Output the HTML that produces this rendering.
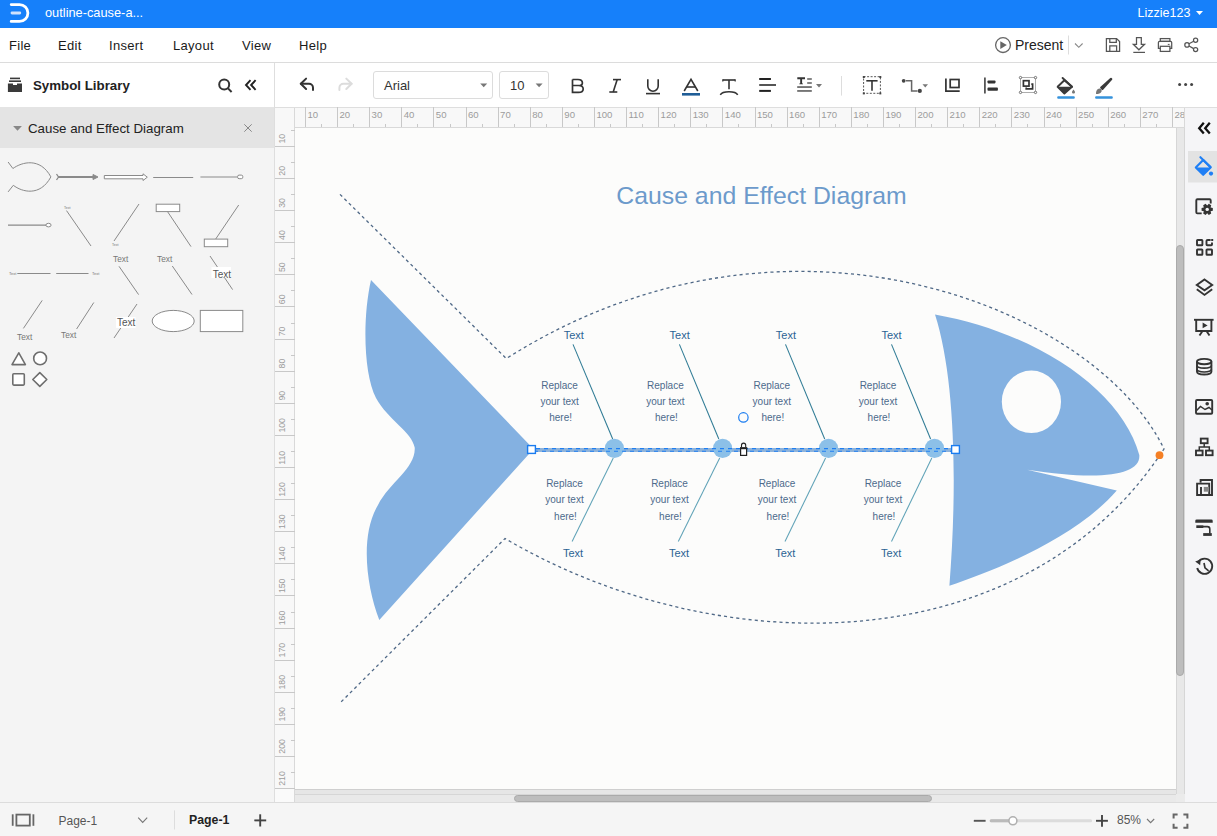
<!DOCTYPE html>
<html><head><meta charset="utf-8">
<style>
*{margin:0;padding:0;box-sizing:border-box}
html,body{width:1217px;height:836px;overflow:hidden;background:#f5f5f5;font-family:"Liberation Sans",sans-serif;position:relative}
.a{position:absolute}
.t{position:absolute;white-space:nowrap;line-height:1}
svg{position:absolute;overflow:visible}
#top{left:0;top:0;width:1217px;height:28px;background:#1680fa}
#menu{left:0;top:28px;width:1217px;height:35px;background:#fff;border-bottom:1px solid #dcdcdc}
#lp{left:0;top:63px;width:275px;height:739px;background:#f4f4f4;border-right:1px solid #dedede}
#lph{left:0;top:63px;width:274px;height:44px;background:#fff}
#cat{left:0;top:107px;width:274px;height:41px;background:#e4e4e4}
#tb{left:275px;top:63px;width:942px;height:45px;background:#fff;border-bottom:1px solid #dedede}
#rtop{left:275px;top:108px;width:910px;height:20px;background:#f8f8f8;border-bottom:1px solid #d9d9d9;border-right:1px solid #d9d9d9}
#rleft{left:275px;top:108px;width:20px;height:681px;background:#f8f8f8;border-right:1px solid #d9d9d9}
#canvas{left:295px;top:128px;width:881px;height:661px;background:#fcfcfb}
#vsb{left:1176px;top:128px;width:9px;height:666px;background:#e8e8e8;border-left:1px solid #d6d6d6;border-right:1px solid #d6d6d6}
#hsb{left:295px;top:789px;width:881px;height:13px;background:#e9e9e9;border-top:1px solid #cfcfcf}
#hsb2{left:295px;top:790px;width:881px;height:5px;background:#e6e6e6;border-bottom:1px solid #d6d6d6}
#corner{left:275px;top:789px;width:20px;height:13px;background:#fafafa;border-right:1px solid #d9d9d9}
#corner2{left:1176px;top:794px;width:9px;height:8px;background:#ebebeb}
#rs{left:1185px;top:108px;width:32px;height:694px;background:#f5f5f7}
#status{left:0;top:802px;width:1217px;height:34px;background:#f5f5f5;border-top:1px solid #dcdcdc}
.mt{font-size:13px;color:#1a1a1a;top:39px;letter-spacing:0.3px}
.box{position:absolute;background:#fff;border:1px solid #dcdcdc;border-radius:3px}
</style></head><body>
<div id="top" class="a"></div>
<div id="menu" class="a"></div>
<div id="lp" class="a"></div>
<div id="lph" class="a"></div>
<div id="cat" class="a"></div>
<div id="tb" class="a"></div>
<div id="rtop" class="a"></div>
<div id="rleft" class="a"></div>
<div id="canvas" class="a"></div>
<div id="vsb" class="a"></div>
<div id="hsb" class="a"></div><div id="hsb2" class="a"></div><div id="corner" class="a"></div><div id="corner2" class="a"></div>
<div id="rs" class="a"></div>
<div id="status" class="a"></div>

<!-- top bar -->
<svg width="30" height="28" style="left:0;top:0">
  <path d="M11.2 4.6 H19.5 A8.4 8.4 0 0 1 19.5 21.4 H11.2" fill="none" stroke="#fff" stroke-width="2.8" stroke-linecap="round"/>
  <path d="M12 13 H19.8" stroke="#cfe2fd" stroke-width="2.8" stroke-linecap="round"/>
</svg>
<div class="t" style="left:45px;top:7px;font-size:12.8px;color:#fff">outline-cause-a...</div>
<div class="t" style="left:1137.6px;top:7px;font-size:12.5px;color:#fff">Lizzie123</div>
<svg width="10" height="6" style="left:1196px;top:11px"><path d="M0 0H7L3.5 4Z" fill="#fff"/></svg>

<!-- menu -->
<div class="t mt" style="left:9px">File</div>
<div class="t mt" style="left:58px">Edit</div>
<div class="t mt" style="left:109px">Insert</div>
<div class="t mt" style="left:173px">Layout</div>
<div class="t mt" style="left:242px">View</div>
<div class="t mt" style="left:299px">Help</div>

<!-- left header -->
<div class="t" style="left:33px;top:79px;font-size:13.3px;font-weight:bold;color:#222">Symbol Library</div>
<div class="t" style="left:28px;top:122px;font-size:13.3px;color:#222">Cause and Effect Diagram</div>

<!-- toolbar -->
<div class="box" style="left:373px;top:71px;width:120px;height:28px"></div>
<div class="t" style="left:384px;top:79px;font-size:13px;color:#333">Arial</div>
<div class="box" style="left:499px;top:71px;width:50px;height:28px"></div>
<div class="t" style="left:510px;top:79px;font-size:13px;color:#333">10</div>

<div class="t" style="left:1015px;top:38px;font-size:14px;color:#222">Present</div>

<!-- status -->
<div class="t" style="left:58.5px;top:815px;font-size:12px;color:#555">Page-1</div>
<div class="t" style="left:189px;top:813.5px;font-size:12.3px;font-weight:bold;color:#222">Page-1</div>
<div class="t" style="left:1117px;top:814px;font-size:12px;color:#555">85%</div>
<svg width="1217" height="836" style="left:0;top:0"><defs><clipPath id="ct"><rect x="295" y="107" width="889" height="20"/></clipPath><clipPath id="cl"><rect x="275" y="127" width="20" height="662"/></clipPath></defs><g clip-path="url(#ct)"><g stroke="#c8c8c8" stroke-width="1" shape-rendering="crispEdges"><line x1="305.5" y1="107" x2="305.5" y2="127"/><line x1="321.5" y1="124" x2="321.5" y2="127"/><line x1="337.5" y1="107" x2="337.5" y2="127"/><line x1="353.5" y1="124" x2="353.5" y2="127"/><line x1="369.5" y1="107" x2="369.5" y2="127"/><line x1="385.5" y1="124" x2="385.5" y2="127"/><line x1="401.5" y1="107" x2="401.5" y2="127"/><line x1="417.5" y1="124" x2="417.5" y2="127"/><line x1="433.5" y1="107" x2="433.5" y2="127"/><line x1="450.5" y1="124" x2="450.5" y2="127"/><line x1="466.5" y1="107" x2="466.5" y2="127"/><line x1="482.5" y1="124" x2="482.5" y2="127"/><line x1="498.5" y1="107" x2="498.5" y2="127"/><line x1="514.5" y1="124" x2="514.5" y2="127"/><line x1="530.5" y1="107" x2="530.5" y2="127"/><line x1="546.5" y1="124" x2="546.5" y2="127"/><line x1="562.5" y1="107" x2="562.5" y2="127"/><line x1="578.5" y1="124" x2="578.5" y2="127"/><line x1="594.5" y1="107" x2="594.5" y2="127"/><line x1="610.5" y1="124" x2="610.5" y2="127"/><line x1="626.5" y1="107" x2="626.5" y2="127"/><line x1="642.5" y1="124" x2="642.5" y2="127"/><line x1="658.5" y1="107" x2="658.5" y2="127"/><line x1="674.5" y1="124" x2="674.5" y2="127"/><line x1="690.5" y1="107" x2="690.5" y2="127"/><line x1="706.5" y1="124" x2="706.5" y2="127"/><line x1="722.5" y1="107" x2="722.5" y2="127"/><line x1="738.5" y1="124" x2="738.5" y2="127"/><line x1="755.5" y1="107" x2="755.5" y2="127"/><line x1="771.5" y1="124" x2="771.5" y2="127"/><line x1="787.5" y1="107" x2="787.5" y2="127"/><line x1="803.5" y1="124" x2="803.5" y2="127"/><line x1="819.5" y1="107" x2="819.5" y2="127"/><line x1="835.5" y1="124" x2="835.5" y2="127"/><line x1="851.5" y1="107" x2="851.5" y2="127"/><line x1="867.5" y1="124" x2="867.5" y2="127"/><line x1="883.5" y1="107" x2="883.5" y2="127"/><line x1="899.5" y1="124" x2="899.5" y2="127"/><line x1="915.5" y1="107" x2="915.5" y2="127"/><line x1="931.5" y1="124" x2="931.5" y2="127"/><line x1="947.5" y1="107" x2="947.5" y2="127"/><line x1="963.5" y1="124" x2="963.5" y2="127"/><line x1="979.5" y1="107" x2="979.5" y2="127"/><line x1="995.5" y1="124" x2="995.5" y2="127"/><line x1="1011.5" y1="107" x2="1011.5" y2="127"/><line x1="1027.5" y1="124" x2="1027.5" y2="127"/><line x1="1044.5" y1="107" x2="1044.5" y2="127"/><line x1="1060.5" y1="124" x2="1060.5" y2="127"/><line x1="1076.5" y1="107" x2="1076.5" y2="127"/><line x1="1092.5" y1="124" x2="1092.5" y2="127"/><line x1="1108.5" y1="107" x2="1108.5" y2="127"/><line x1="1124.5" y1="124" x2="1124.5" y2="127"/><line x1="1140.5" y1="107" x2="1140.5" y2="127"/><line x1="1156.5" y1="124" x2="1156.5" y2="127"/><line x1="1172.5" y1="107" x2="1172.5" y2="127"/><line x1="1188.5" y1="124" x2="1188.5" y2="127"/></g><g fill="#9c9c9c" font-size="9.6" font-family="Liberation Sans"><text x="307.4" y="118">10</text><text x="339.5" y="118">20</text><text x="371.6" y="118">30</text><text x="403.7" y="118">40</text><text x="435.8" y="118">50</text><text x="468.0" y="118">60</text><text x="500.1" y="118">70</text><text x="532.2" y="118">80</text><text x="564.3" y="118">90</text><text x="596.4" y="118">100</text><text x="628.5" y="118">110</text><text x="660.6" y="118">120</text><text x="692.7" y="118">130</text><text x="724.8" y="118">140</text><text x="756.9" y="118">150</text><text x="789.1" y="118">160</text><text x="821.2" y="118">170</text><text x="853.3" y="118">180</text><text x="885.4" y="118">190</text><text x="917.5" y="118">200</text><text x="949.6" y="118">210</text><text x="981.7" y="118">220</text><text x="1013.8" y="118">230</text><text x="1045.9" y="118">240</text><text x="1078.1" y="118">250</text><text x="1110.2" y="118">260</text><text x="1142.3" y="118">270</text><text x="1174.4" y="118">280</text></g></g><g clip-path="url(#cl)"><g stroke="#c8c8c8" stroke-width="1" shape-rendering="crispEdges"><line x1="275" y1="146.5" x2="295" y2="146.5"/><line x1="275" y1="178.5" x2="295" y2="178.5"/><line x1="275" y1="210.5" x2="295" y2="210.5"/><line x1="275" y1="242.5" x2="295" y2="242.5"/><line x1="275" y1="274.5" x2="295" y2="274.5"/><line x1="275" y1="306.5" x2="295" y2="306.5"/><line x1="275" y1="339.5" x2="295" y2="339.5"/><line x1="275" y1="371.5" x2="295" y2="371.5"/><line x1="275" y1="403.5" x2="295" y2="403.5"/><line x1="275" y1="435.5" x2="295" y2="435.5"/><line x1="275" y1="467.5" x2="295" y2="467.5"/><line x1="275" y1="499.5" x2="295" y2="499.5"/><line x1="275" y1="531.5" x2="295" y2="531.5"/><line x1="275" y1="563.5" x2="295" y2="563.5"/><line x1="275" y1="595.5" x2="295" y2="595.5"/><line x1="275" y1="628.5" x2="295" y2="628.5"/><line x1="275" y1="660.5" x2="295" y2="660.5"/><line x1="275" y1="692.5" x2="295" y2="692.5"/><line x1="275" y1="724.5" x2="295" y2="724.5"/><line x1="275" y1="756.5" x2="295" y2="756.5"/><line x1="275" y1="788.5" x2="295" y2="788.5"/><line x1="291" y1="130.5" x2="295" y2="130.5"/><line x1="291" y1="162.5" x2="295" y2="162.5"/><line x1="291" y1="194.5" x2="295" y2="194.5"/><line x1="291" y1="226.5" x2="295" y2="226.5"/><line x1="291" y1="258.5" x2="295" y2="258.5"/><line x1="291" y1="290.5" x2="295" y2="290.5"/><line x1="291" y1="323.5" x2="295" y2="323.5"/><line x1="291" y1="355.5" x2="295" y2="355.5"/><line x1="291" y1="387.5" x2="295" y2="387.5"/><line x1="291" y1="419.5" x2="295" y2="419.5"/><line x1="291" y1="451.5" x2="295" y2="451.5"/><line x1="291" y1="483.5" x2="295" y2="483.5"/><line x1="291" y1="515.5" x2="295" y2="515.5"/><line x1="291" y1="547.5" x2="295" y2="547.5"/><line x1="291" y1="579.5" x2="295" y2="579.5"/><line x1="291" y1="612.5" x2="295" y2="612.5"/><line x1="291" y1="644.5" x2="295" y2="644.5"/><line x1="291" y1="676.5" x2="295" y2="676.5"/><line x1="291" y1="708.5" x2="295" y2="708.5"/><line x1="291" y1="740.5" x2="295" y2="740.5"/><line x1="291" y1="772.5" x2="295" y2="772.5"/></g><g fill="#9c9c9c" font-size="9.9" font-family="Liberation Sans"><text transform="translate(284.9 143.6) rotate(-90) scale(0.88 1)">10</text><text transform="translate(284.9 175.7) rotate(-90) scale(0.88 1)">20</text><text transform="translate(284.9 207.8) rotate(-90) scale(0.88 1)">30</text><text transform="translate(284.9 239.9) rotate(-90) scale(0.88 1)">40</text><text transform="translate(284.9 272.1) rotate(-90) scale(0.88 1)">50</text><text transform="translate(284.9 304.2) rotate(-90) scale(0.88 1)">60</text><text transform="translate(284.9 336.3) rotate(-90) scale(0.88 1)">70</text><text transform="translate(284.9 368.4) rotate(-90) scale(0.88 1)">80</text><text transform="translate(284.9 400.5) rotate(-90) scale(0.88 1)">90</text><text transform="translate(284.9 432.6) rotate(-90) scale(0.88 1)">100</text><text transform="translate(284.9 464.7) rotate(-90) scale(0.88 1)">110</text><text transform="translate(284.9 496.8) rotate(-90) scale(0.88 1)">120</text><text transform="translate(284.9 528.9) rotate(-90) scale(0.88 1)">130</text><text transform="translate(284.9 561.0) rotate(-90) scale(0.88 1)">140</text><text transform="translate(284.9 593.1) rotate(-90) scale(0.88 1)">150</text><text transform="translate(284.9 625.3) rotate(-90) scale(0.88 1)">160</text><text transform="translate(284.9 657.4) rotate(-90) scale(0.88 1)">170</text><text transform="translate(284.9 689.5) rotate(-90) scale(0.88 1)">180</text><text transform="translate(284.9 721.6) rotate(-90) scale(0.88 1)">190</text><text transform="translate(284.9 753.7) rotate(-90) scale(0.88 1)">200</text><text transform="translate(284.9 785.8) rotate(-90) scale(0.88 1)">210</text></g></g></svg>
<svg width="1217" height="836" style="left:0;top:0">
<defs><clipPath id="cc"><rect x="295" y="127" width="881" height="661"/></clipPath></defs>
<g clip-path="url(#cc)" font-family="Liberation Sans">
<text x="616.3" y="204.2" font-size="24.8" fill="#6c9acb">Cause and Effect Diagram</text>
<!-- dotted outline -->
<g fill="none" stroke="#4f6886" stroke-width="1.3" stroke-dasharray="3.1 3.1">
<path d="M340 194.4 L506.3 358.6 C785.3 181.3 1095.3 306.5 1164 449 C1024.2 662.9 718.2 663.6 505 538.5 L340 703"/>
</g>
<!-- tail -->
<path fill="#84b1e1" d="M371 280 L533.5 449 L379.3 620 C366 585 360 535 378 505 C390 482 416 468 414.7 447.6 C412 432 388 420 376 398 C364 375 362 320 371 280 Z"/>
<!-- head -->
<path fill="#84b1e1" d="M935 314.5 C1038.1 333 1121.9 391.1 1139.3 455 C1140.9 475 1101.7 481.2 1027.1 469.7 L1116.8 490.5 C1074 540 990 572 949.4 585.7 C957 490 956 380 935 314.5 Z"/>
<ellipse cx="1031.4" cy="401.8" rx="29.6" ry="31.3" fill="#fcfcfb"/>
<!-- upper bones -->
<g stroke="#2f7b95" stroke-width="1.05">
<line x1="573" y1="344.4" x2="612.7" y2="439"/>
<line x1="679.4" y1="344.4" x2="718.8" y2="439"/>
<line x1="785.5" y1="344.4" x2="824.7" y2="439"/>
<line x1="891.5" y1="344.4" x2="930.6" y2="439"/>
</g>
<g stroke="#5fa2b7" stroke-width="1.05">
<line x1="613.3" y1="458" x2="572.1" y2="541.4"/>
<line x1="719.7" y1="458" x2="678.3" y2="541.4"/>
<line x1="825.6" y1="458" x2="785" y2="541.4"/>
<line x1="931.8" y1="458" x2="891.5" y2="541.4"/>
</g>
<!-- spine -->
<line x1="533" y1="449.9" x2="955" y2="449.9" stroke="#8fb3da" stroke-width="4"/>
<g fill="#8cc0e8">
<circle cx="614.4" cy="448.4" r="9.6"/>
<circle cx="722.6" cy="448.4" r="9.6"/>
<circle cx="828.5" cy="448.4" r="9.6"/>
<circle cx="934.5" cy="448.4" r="9.6"/>
</g>
<g stroke="#1f7ff2" stroke-width="1.1" stroke-dasharray="4 4">
<line x1="536" y1="448.6" x2="951" y2="448.6" stroke-dashoffset="0"/>
<line x1="536" y1="451.3" x2="951" y2="451.3" stroke-dashoffset="2"/>
</g>
<rect x="527.6" y="445.6" width="7.8" height="7.8" fill="#fff" stroke="#1a7cf0" stroke-width="1.4"/>
<rect x="951.6" y="445.6" width="7.8" height="7.8" fill="#fff" stroke="#1a7cf0" stroke-width="1.4"/>
<circle cx="743.4" cy="417.4" r="4.7" fill="none" stroke="#1a7cf0" stroke-width="1.2"/>
<!-- lock -->
<path d="M741.5 447.6 V445.2 A2.1 2.1 0 0 1 745.7 445.2 V447.6" fill="none" stroke="#222" stroke-width="1.1"/>
<rect x="740.6" y="447.8" width="6" height="7.6" fill="#fff" stroke="#222" stroke-width="1.2"/><line x1="740" y1="448.4" x2="747.2" y2="448.4" stroke="#222" stroke-width="1.6"/>

<circle cx="1159.5" cy="455.2" r="3.9" fill="#f58025"/>
<!-- labels -->
<g font-size="11" fill="#2b6394">
<text x="563.7" y="338.9">Text</text>
<text x="669.6" y="338.9">Text</text>
<text x="775.8" y="338.9">Text</text>
<text x="881.5" y="338.9">Text</text>
<text x="563" y="557">Text</text>
<text x="669" y="557">Text</text>
<text x="775.2" y="557">Text</text>
<text x="881.1" y="557">Text</text>
</g>
<g font-size="10" fill="#4d6a8b" text-anchor="middle">
<text x="559.6" y="389">Replace</text><text x="559.6" y="404.9">your text</text><text x="560.6" y="420.7">here!</text>
<text x="665.4" y="389">Replace</text><text x="665.4" y="404.9">your text</text><text x="666.4" y="420.7">here!</text>
<text x="771.8" y="389">Replace</text><text x="771.8" y="404.9">your text</text><text x="772.8" y="420.7">here!</text>
<text x="878" y="389">Replace</text><text x="878" y="404.9">your text</text><text x="879" y="420.7">here!</text>
<text x="564.5" y="487">Replace</text><text x="564.5" y="502.8">your text</text><text x="565.5" y="519.5">here!</text>
<text x="669.5" y="487">Replace</text><text x="669.5" y="502.8">your text</text><text x="670.5" y="519.5">here!</text>
<text x="777" y="487">Replace</text><text x="777" y="502.8">your text</text><text x="778" y="519.5">here!</text>
<text x="883" y="487">Replace</text><text x="883" y="502.8">your text</text><text x="884" y="519.5">here!</text>
</g>
</g>
</svg>

<svg width="275" height="400" style="left:0;top:0" font-family="Liberation Sans">
<g fill="none" stroke="#8a8a8a" stroke-width="1">
<!-- fish outline -->
<path d="M8.1 162 L12.9 168.5 C22 162 40 157 50.9 176.9 C40 197 22 192 13.3 185.3 L8.1 191.9"/>
</g>
<!-- thick arrow -->
<g stroke="#8a8a8a">
<line x1="58" y1="177" x2="94" y2="177" stroke-width="1.8"/>
<path d="M56.5 174 L58.5 177 L56.5 180" fill="none" stroke-width="1.3"/>
<path d="M93 174.5 L98 177 L93 179.5 Z" fill="#8a8a8a" stroke-width="1"/>
<!-- double arrow -->
<path d="M104.3 175.5 H143 V173.8 L147.3 177.2 L143 180.5 V178.8 H104.3 Z" fill="#fff" stroke-width="1"/>
<line x1="153.2" y1="177.5" x2="193.2" y2="177.5" stroke-width="1.2"/>
<line x1="200.4" y1="177" x2="237.6" y2="177" stroke-width="1.2"/>
<rect x="237.6" y="175.1" width="5.2" height="3.6" rx="1.5" fill="#fff" stroke-width="1"/>
<!-- row2 -->
<line x1="8" y1="225.1" x2="46" y2="225.1" stroke-width="1.2"/>
<ellipse cx="48.5" cy="225.1" rx="2.6" ry="1.8" fill="#fff" stroke-width="1"/>
<line x1="66.5" y1="210.6" x2="91" y2="246" stroke-width="1"/>
<line x1="139" y1="204" x2="114" y2="241" stroke-width="1"/>
<rect x="156.2" y="204.2" width="23.5" height="7.4" fill="#fff" stroke-width="1"/>
<line x1="167.5" y1="211.6" x2="191" y2="246.6" stroke-width="1"/>
<rect x="204.3" y="239.1" width="23.4" height="7.6" fill="#fff" stroke-width="1"/>
<line x1="238.7" y1="205" x2="215.7" y2="239" stroke-width="1"/>
<!-- row3 -->
<line x1="17.3" y1="273.5" x2="50.5" y2="273.5" stroke-width="1.1"/>
<line x1="56.2" y1="273.5" x2="88.5" y2="273.5" stroke-width="1.1"/>
<line x1="119" y1="266.3" x2="138.6" y2="294.6" stroke-width="1"/>
<line x1="172.3" y1="266" x2="192" y2="294.5" stroke-width="1"/>
<line x1="210" y1="256" x2="232.6" y2="289.6" stroke-width="1"/>
<!-- row4 -->
<line x1="42.2" y1="300.4" x2="23.4" y2="328.4" stroke-width="1"/>
<line x1="93.8" y1="302.5" x2="76.6" y2="329" stroke-width="1"/>
<line x1="137" y1="304" x2="114" y2="338" stroke-width="1"/>
<ellipse cx="173.2" cy="321" rx="21" ry="10.6" fill="#fff" stroke-width="1"/>
<rect x="200.3" y="310.4" width="42.5" height="21.2" fill="#fff" stroke-width="1"/>
</g>
<g fill="#777">
<text x="64" y="208.5" font-size="3.5">Text</text>
<text x="112" y="245.5" font-size="3.5">Text</text>
<text x="9" y="275" font-size="4">Text</text>
<text x="92" y="275" font-size="4">Text</text>
<text x="113" y="261.7" font-size="8.3">Text</text>
<text x="157" y="262" font-size="8.3">Text</text>
<text x="17" y="340" font-size="8.3">Text</text>
<text x="61" y="338" font-size="8.3">Text</text>
</g>
<rect x="211.5" y="267" width="19.5" height="11" fill="#fff"/>
<rect x="116" y="317" width="19.5" height="11" fill="#fff"/>
<g fill="#555" font-size="10">
<text x="212.7" y="277.5">Text</text>
<text x="117" y="326">Text</text>
</g>
<!-- basic shapes -->
<g fill="#fff" stroke="#6e6e6e" stroke-width="1.6" stroke-linejoin="round">
<path d="M18.8 352.8 L25.4 364.6 H12 Z"/>
<circle cx="40.1" cy="358.4" r="6.4"/>
<rect x="12.8" y="373.8" width="11.5" height="11.3" rx="1"/>
<path d="M39.8 372.6 L46.8 379.5 L39.8 386.4 L32.8 379.5 Z"/>
</g>
</svg>

<svg width="1217" height="836" style="left:0;top:0" font-family="Liberation Sans">
<!-- menu right -->
<g fill="none" stroke="#666" stroke-width="1.3">
<circle cx="1003" cy="45.1" r="7.4"/>
</g>
<path d="M1000.3 41.2 L1006.8 45.1 L1000.3 49 Z" fill="#666"/>
<line x1="1068.5" y1="35.5" x2="1068.5" y2="54.5" stroke="#ddd" stroke-width="1"/>
<path d="M1075 43.5 L1078.8 47.3 L1082.6 43.5" fill="none" stroke="#888" stroke-width="1.1"/>
<g fill="none" stroke="#555" stroke-width="1.25" stroke-linejoin="miter">
<path d="M1106.4 38.6 H1116.6 L1119.6 41.6 V51.3 H1106.4 Z"/>
<path d="M1109.8 38.6 V42.3 H1116.3 V38.6"/>
<path d="M1109.8 51.3 V45.8 H1116.6 V51.3"/>
<path d="M1136.5 37.6 H1141.3 V44.3 H1144.6 L1138.9 49.8 L1133.3 44.3 H1136.5 Z"/>
<line x1="1133.3" y1="52.4" x2="1145" y2="52.4"/>
<rect x="1160.3" y="38.6" width="9.6" height="2.8"/>
<path d="M1160.3 48.4 H1158.4 V42.6 Q1158.4 41.4 1159.6 41.4 H1170.5 Q1171.7 41.4 1171.7 42.6 V48.4 H1169.9"/>
<rect x="1160.3" y="46.3" width="9.6" height="5.1"/>
<circle cx="1187" cy="44.9" r="2.2"/>
<circle cx="1195.6" cy="40.3" r="2.1"/>
<circle cx="1195.6" cy="49.6" r="2.1"/>
<line x1="1189" y1="43.8" x2="1193.7" y2="41.3"/>
<line x1="1189" y1="46" x2="1193.7" y2="48.6"/>
</g>
<line x1="1167.8" y1="44.4" x2="1169.6" y2="44.4" stroke="#555" stroke-width="1"/>

<!-- left header icons -->
<g fill="#3a3a3a">
<rect x="10" y="77.6" width="10" height="1.6"/>
<rect x="9" y="80.4" width="12" height="1.6"/>
<path d="M7.9 83.4 H13 V85 H17 V83.4 H22 V92 H7.9 Z"/>
</g>
<g fill="none" stroke="#333" stroke-width="2">
<circle cx="224.2" cy="84.6" r="5"/>
<line x1="228" y1="88.4" x2="231.6" y2="92"/>
</g>
<g fill="none" stroke="#222" stroke-width="1.9">
<path d="M250.5 80.2 L246 85 L250.5 89.8"/>
<path d="M255.6 80.2 L251.1 85 L255.6 89.8"/>
</g>
<g stroke="#888" stroke-width="1">
<line x1="244.3" y1="124.3" x2="251.7" y2="131.7"/>
<line x1="251.7" y1="124.3" x2="244.3" y2="131.7"/>
</g>
<path d="M13.1 126 H21.9 L17.5 130.7 Z" fill="#888"/>

<!-- toolbar -->
<g fill="none" stroke="#333" stroke-width="2" stroke-linecap="round" stroke-linejoin="round">
<path d="M306.1 78.6 L300.8 83.8 L306.1 89"/>
<path d="M300.8 83.8 H309 A4 4 0 0 1 313 87.8 V90.1"/>
</g>
<g fill="none" stroke="#dcdcdc" stroke-width="2" stroke-linecap="round" stroke-linejoin="round">
<path d="M346.3 78.6 L351.6 83.8 L346.3 89"/>
<path d="M351.6 83.8 H343.4 A4 4 0 0 0 339.4 87.8 V90.1"/>
</g>
<path d="M480.2 83.4 H487.2 L483.7 87.2 Z" fill="#777"/>
<path d="M535.6 83.4 H542.6 L539.1 87.2 Z" fill="#777"/>
<!-- B -->
<path d="M572.5 79.5 H578 C581.5 79.5 582.4 81.3 582.4 82.9 C582.4 84.6 581.2 85.5 578.5 85.5 H572.5 M578.5 85.5 C582 85.5 583.2 87.2 583.2 89 C583.2 91 581.8 92.4 578.5 92.4 H572.5 V79.5" fill="none" stroke="#333" stroke-width="1.7"/>
<!-- I -->
<g stroke="#333" stroke-width="1.6" fill="none">
<line x1="613" y1="79.6" x2="621" y2="79.6"/>
<line x1="609.3" y1="92" x2="617.3" y2="92"/>
<line x1="617.2" y1="79.6" x2="613.2" y2="92"/>
</g>
<!-- U -->
<g stroke="#333" stroke-width="1.6" fill="none">
<path d="M647.8 79.2 V86 A5.2 5.2 0 0 0 658.2 86 V79.2"/>
<line x1="646" y1="93.6" x2="660" y2="93.6"/>
</g>
<!-- A -->
<g stroke="#333" stroke-width="1.6" fill="none">
<path d="M684.2 91 L691 79.3 L697.8 91"/>
<line x1="686.6" y1="87" x2="695.4" y2="87"/>
</g>
<rect x="682" y="93" width="18" height="2.6" fill="#1f5d97"/>
<!-- T arc -->
<g stroke="#333" stroke-width="1.6" fill="none">
<line x1="723" y1="80" x2="735" y2="80"/>
<line x1="729" y1="80" x2="729" y2="89.2"/>
<path d="M720.3 94.8 C722.5 90.8 735.5 90.8 737.7 94.8"/>
</g>
<path d="M722.8 79.2 V81.6 M735.2 79.2 V81.6" stroke="#333" stroke-width="1.2"/>
<!-- align -->
<g stroke-width="2">
<line x1="759.2" y1="79" x2="770.9" y2="79" stroke="#222"/>
<line x1="759.2" y1="85" x2="776" y2="85" stroke="#555"/>
<line x1="759.2" y1="90.9" x2="770.9" y2="90.9" stroke="#222"/>
</g>
<!-- line spacing -->
<g>
<path d="M797.3 77.3 H805 V79.2 H802.1 V83.4 H803 V84.2 H799.3 V83.4 H800.2 V79.2 H797.3 Z" fill="#333"/>
<rect x="807.2" y="78.2" width="4.6" height="1.6" fill="#666"/>
<rect x="807.2" y="82.2" width="4.6" height="1.6" fill="#666"/>
<rect x="797.2" y="86.2" width="14.6" height="1.7" fill="#666"/>
<rect x="797.2" y="90.1" width="14.6" height="1.7" fill="#666"/>
<path d="M816 84.1 H822 L819 87.6 Z" fill="#777"/>
</g>
<line x1="841.5" y1="76" x2="841.5" y2="95.6" stroke="#ddd" stroke-width="1"/>
<!-- T dotted box -->
<rect x="863.6" y="76.7" width="16.8" height="16.6" fill="none" stroke="#555" stroke-width="1" stroke-dasharray="2 1.5"/>
<g fill="#444"><rect x="862.8" y="76" width="2" height="2"/><rect x="879.3" y="76" width="2" height="2"/><rect x="862.8" y="92.4" width="2" height="2"/><rect x="879.3" y="92.4" width="2" height="2"/></g>
<g stroke="#333" stroke-width="1.6"><line x1="866.3" y1="80.8" x2="877.6" y2="80.8"/><line x1="872" y1="80.8" x2="872" y2="90.7"/></g>
<!-- connector -->
<circle cx="903.7" cy="80.8" r="1.9" fill="#444"/>
<circle cx="919.8" cy="90.9" r="2.1" fill="#444"/>
<path d="M906 80.8 H911.6 V90.9 H917.5" fill="none" stroke="#666" stroke-width="1.5"/>
<path d="M922.5 84.2 H928 L925.25 87.5 Z" fill="#777"/>
<!-- container -->
<g fill="none" stroke="#333" stroke-width="1.7">
<path d="M945.9 78.4 V91.2 H959.7"/>
<rect x="950.2" y="79.5" width="8.8" height="8"/>
</g>
<!-- align left -->
<line x1="984.9" y1="77.4" x2="984.9" y2="93.6" stroke="#555" stroke-width="1.8"/>
<rect x="987.5" y="80.4" width="8" height="3" rx="0.8" fill="#333"/>
<rect x="987.5" y="87.6" width="10.4" height="3.2" rx="0.8" fill="#333"/>
<!-- group -->
<rect x="1020.5" y="77.6" width="15" height="14.8" fill="none" stroke="#999" stroke-width="0.8"/>
<g fill="#fff" stroke="#555" stroke-width="0.8">
<circle cx="1020.5" cy="77.6" r="1.2"/><circle cx="1035.5" cy="77.6" r="1.2"/><circle cx="1020.5" cy="92.4" r="1.2"/><circle cx="1035.5" cy="92.4" r="1.2"/>
</g>
<g fill="none" stroke="#333" stroke-width="1.7">
<rect x="1023.4" y="80.7" width="5.6" height="5.4"/>
<path d="M1031.3 84.2 H1032.6 V88.8 H1026.2 V87.6"/>
</g>
<!-- bucket -->
<path d="M1062.6 78 L1072 86.8" stroke="#3a3a3a" stroke-width="1.9" stroke-linecap="round"/>
<path d="M1064.4 80.2 L1072 86.8 L1064.4 93.6 L1057.6 86.8 Z" fill="none" stroke="#3a3a3a" stroke-width="1.9" stroke-linejoin="round"/>
<path d="M1057.6 86.8 H1072 L1064.4 93.6 Z" fill="#3a3a3a"/>
<path d="M1073.5 89.6 C1074.3 90.8 1075 91.4 1075 92.2 C1075 93 1074.3 93.5 1073.5 93.5 C1072.7 93.5 1072 93 1072 92.2 C1072 91.4 1072.7 90.8 1073.5 89.6 Z" fill="#777"/>
<rect x="1057.2" y="96.2" width="17.6" height="2.6" rx="1" fill="#3592dc"/>
<!-- brush -->
<path d="M1110.3 78.1 A1.25 1.25 0 0 1 1112.1 79.8 L1102.9 90 C1102.2 90.6 1100.6 89.2 1100 87.3 Z" fill="#3a3a3a"/>
<path d="M1099.6 88.6 C1101.2 88.6 1102 90 1101.6 91.4 C1100.8 93.4 1098.4 94 1096 94 C1096 91.6 1096.6 89.8 1097.6 89.2 C1098.2 88.8 1098.9 88.6 1099.6 88.6 Z" fill="#777"/>
<rect x="1095.1" y="96.2" width="17.7" height="2.6" rx="1" fill="#3592dc"/>
<!-- ellipsis -->
<g fill="#444"><circle cx="1179.6" cy="84.6" r="1.5"/><circle cx="1185.6" cy="84.6" r="1.5"/><circle cx="1191.6" cy="84.6" r="1.5"/></g>

<!-- right sidebar -->
<rect x="1188" y="151" width="29" height="31.5" fill="#e3e3e3"/>
<g fill="none" stroke="#111" stroke-width="2.3">
<path d="M1203.8 122.8 L1199.2 128.2 L1203.8 133.6"/>
<path d="M1209.8 122.8 L1205.2 128.2 L1209.8 133.6"/>
</g>
<!-- paint bucket blue -->
<g fill="#1f7ff5">
<path d="M1200.4 157.2 L1210.6 167" stroke="#1f7ff5" stroke-width="2.1" stroke-linecap="round"/>
<path d="M1203.2 160 L1210.6 167.4 L1203.2 174.8 L1195.8 167.4 Z" fill="none" stroke="#1f7ff5" stroke-width="2.1" stroke-linejoin="round"/>
<path d="M1195.4 167.4 H1211 L1203.2 175.2 Z"/>
<circle cx="1211" cy="173.6" r="2.1"/>
</g>
<g fill="none" stroke="#333" stroke-width="1.8">
<!-- page settings -->
<path d="M1201.7 213.4 H1197.4 Q1196.3 213.4 1196.3 212.3 V200.4 Q1196.3 199.3 1197.4 199.3 H1209.6 Q1210.7 199.3 1210.7 200.4 V203.4" stroke-width="1.9"/>
</g>
<path d="M1210.58 207.45 L1212.83 208.00 L1212.83 210.80 L1210.58 211.35 L1210.58 211.35 L1211.23 213.57 L1208.80 214.98 L1207.20 213.30 L1207.20 213.30 L1205.60 214.98 L1203.17 213.57 L1203.82 211.35 L1203.82 211.35 L1201.57 210.80 L1201.57 208.00 L1203.82 207.45 L1203.82 207.45 L1203.17 205.23 L1205.60 203.82 L1207.20 205.50 L1207.20 205.50 L1208.80 203.82 L1211.23 205.23 L1210.58 207.45 Z" fill="#333"/><circle cx="1207.2" cy="209.4" r="1.7" fill="#f5f5f7"/>
<g fill="none" stroke="#333" stroke-width="1.9">
<!-- grid -->
<rect x="1197" y="240" width="5.4" height="5.3" rx="0.6"/>
<path d="M1210.6 240 H1207.8 Q1206.5 240 1206.5 240.8 V244.5 Q1206.5 245.3 1207.3 245.3 H1211.2 Q1212 245.3 1212 244.5 V242.6"/>
<rect x="1197" y="249.5" width="5.4" height="5.3" rx="0.6"/>
<rect x="1206.5" y="249.5" width="5.5" height="5.3" rx="0.6"/>
<rect x="1211.2" y="239" width="2" height="2" fill="#333" stroke="none"/>
<!-- layers -->
<path d="M1204.5 279.5 L1212.2 285 L1204.5 290.4 L1196.8 285 Z"/>
<path d="M1196.8 289.2 L1204.5 294.9 L1212.2 289.2"/>
<!-- presentation -->
<line x1="1194" y1="319.8" x2="1213.6" y2="319.8"/>
<path d="M1196.2 320 V331 H1211.4 V320"/>
<path d="M1199.5 335.5 L1202.2 331.5 M1209.5 335.5 L1206.8 331.5"/>
<!-- database -->
<ellipse cx="1204.2" cy="361.6" rx="7.2" ry="2.7"/>
<path d="M1197 361.6 V371.8 C1197 375.4 1211.4 375.4 1211.4 371.8 V361.6"/>
<path d="M1197 365.5 C1197 369 1211.4 369 1211.4 365.5 M1197 369.3 C1197 372.8 1211.4 372.8 1211.4 369.3" stroke-width="1.6"/>
<!-- image -->
<rect x="1196" y="400" width="16.2" height="13.8" rx="1"/>
<path d="M1196.6 410.5 L1200.5 406.5 L1205 409.5 L1209 407.5 L1212 410" stroke-width="1.5"/>
<!-- org -->
<rect x="1200.8" y="438.6" width="6.8" height="4.6"/>
<rect x="1196" y="450.6" width="6.6" height="4.6"/>
<rect x="1206" y="450.6" width="6.6" height="4.6"/>
<path d="M1204.2 443.2 V447 M1199.3 450.6 V447 H1209.3 V450.6" stroke-width="1.5"/>
<!-- frames -->
<path d="M1200.6 482.6 V480 H1212 V495 H1197.1 V483.6 H1209.2 V495 M1201 487 V495"/>
<!-- connector structure -->
<path d="M1203 526.6 H1207.4 Q1209.8 526.6 1209.8 529 V533.4" stroke-width="1.6"/>
<!-- history -->
<path d="M1198.6 561.6 A7.6 7.6 0 1 1 1197.2 568" stroke-width="1.9"/>
<path d="M1204 563 L1205 567.8 L1208.6 570.8" stroke-width="1.7"/>
</g>
<rect x="1203.8" y="486.9" width="5.3" height="4.8" fill="#888"/>
<path d="M1195.3 522.8 V520.8 Q1195.3 519.4 1196.7 519.4 H1211.3 Q1212.7 519.4 1212.7 520.8 V522.8 H1211.8 V522.7 H1196.2 V522.8 Z" fill="#333"/>
<rect x="1196.3" y="525.3" width="7" height="2.7" fill="#333"/>
<rect x="1203.2" y="533.1" width="8.6" height="2.8" fill="#333"/>
<path d="M1195.2 561.6 L1200.6 559.6 L1200.2 565.2 Z" fill="#333"/>
<circle cx="1207.2" cy="403.8" r="1.8" fill="#333"/>
<path d="M1204.5 335.5 L1209 332.4 L1204.5 329.3 Z" fill="none"/>
<path d="M1202.6 322.6 L1207.6 325.4 L1202.6 328.2 Z" fill="#333"/>

<!-- status bar -->
<g fill="none" stroke="#666" stroke-width="1.8">
<line x1="12.7" y1="814.3" x2="12.7" y2="825.8"/>
<line x1="33.4" y1="814.3" x2="33.4" y2="825.8"/>
<rect x="16.4" y="814.6" width="13.4" height="11"/>
</g>
<path d="M138.2 817.6 L142.7 822.4 L147.2 817.6" fill="none" stroke="#777" stroke-width="1.1"/>
<line x1="174.5" y1="810.4" x2="174.5" y2="829.5" stroke="#ddd" stroke-width="1"/>
<g stroke="#444" stroke-width="1.9"><line x1="254.3" y1="820.4" x2="266.2" y2="820.4"/><line x1="260.2" y1="814.3" x2="260.2" y2="826.5"/></g>
<line x1="973.8" y1="820.8" x2="985.6" y2="820.8" stroke="#555" stroke-width="1.9"/>
<line x1="991.2" y1="820.8" x2="1090.6" y2="820.8" stroke="#dcdcdc" stroke-width="3" stroke-linecap="round"/>
<line x1="991.2" y1="820.8" x2="1011" y2="820.8" stroke="#bbb" stroke-width="3" stroke-linecap="round"/>
<circle cx="1012.9" cy="820.8" r="4" fill="#fff" stroke="#b0b0b0" stroke-width="1.6"/>
<g stroke="#444" stroke-width="1.9"><line x1="1096" y1="820.8" x2="1107.9" y2="820.8"/><line x1="1102" y1="814.9" x2="1102" y2="826.7"/></g>
<path d="M1147 819 L1150.6 822.6 L1154.2 819" fill="none" stroke="#777" stroke-width="1.1"/>
<g fill="none" stroke="#666" stroke-width="2">
<path d="M1173.6 818.5 V814.5 H1177.6 M1183.4 814.5 H1187.4 V818.5 M1187.4 823.7 V827.7 H1183.4 M1177.6 827.7 H1173.6 V823.7"/>
</g>
</svg>
<div class="a" style="left:1176px;top:245px;width:8px;height:431px;background:#bdbdbd;border:1px solid #aaa;border-radius:4px"></div>
<div class="a" style="left:514px;top:795px;width:418px;height:7px;background:#bdbdbd;border:1px solid #aaa;border-radius:4px"></div>

</body></html>
